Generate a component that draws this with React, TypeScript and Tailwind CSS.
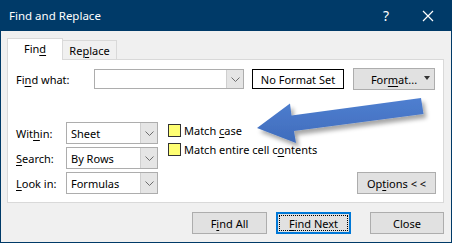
import type { ReactNode } from "react";

function U({ children }: { children: ReactNode }) {
  return <span className="underline decoration-1 underline-offset-2">{children}</span>;
}

function Chevron() {
  return (
    <svg width="9" height="5" viewBox="0 0 9 5">
      <path d="M0.5 0.5 L4.5 4.5 L8.5 0.5" fill="none" stroke="#6d6d6d" strokeWidth="1" />
    </svg>
  );
}

function Select({ value }: { value: string }) {
  return (
    <div className="flex h-[22px] w-[92px] border border-[#adadad] bg-white">
      <div className="flex flex-1 items-center pl-[4px]">{value}</div>
      <div className="flex w-[17px] items-center justify-center border-l border-[#cfcfcf] bg-[#e5e5e5]">
        <Chevron />
      </div>
    </div>
  );
}

function Field({ label, value }: { label: ReactNode; value: string }) {
  return (
    <div className="flex items-center">
      <span className="w-[50px]">{label}</span>
      <Select value={value} />
    </div>
  );
}

function Check({ children }: { children: ReactNode }) {
  return (
    <div className="flex h-[14px] items-center gap-[3px]">
      <span className="h-[13px] w-[13px] border border-[#333333] bg-[#ffff73]" />
      <span>{children}</span>
    </div>
  );
}

function Btn({ children, className }: { children: ReactNode; className?: string }) {
  return (
    <div
      className={
        "flex h-[22px] items-center justify-center border border-[#adadad] bg-[#e1e1e1] " + (className ?? "")
      }
    >
      {children}
    </div>
  );
}

export default function App() {
  return (
    <div className="relative flex h-[243px] w-[452px] flex-col border border-[#003a68] bg-[#f0f0f0] font-['Noto_Sans',sans-serif] text-[11px] leading-none text-black">
      {/* title bar */}
      <div className="flex h-[30px] shrink-0 items-center bg-[#003a68] pl-[8px] text-[11.5px] text-white">
        <span className="flex-1">Find and Replace</span>
        <span className="mr-[33px] text-[14px]">?</span>
        <svg width="12" height="12" viewBox="0 0 12 12" className="mr-[17px]">
          <path d="M1 1 L11 11 M11 1 L1 11" stroke="white" strokeWidth="1.2" />
        </svg>
      </div>

      <div className="flex flex-col pl-[6px] pt-[7px]">
        {/* tabs */}
        <div className="flex h-[21px] items-end">
          <div className="relative z-10 -mb-px flex h-[22px] w-[56px] items-center justify-center border border-b-0 border-[#d9d9d9] bg-white pb-[2px]">
            Fin<U>d</U>
          </div>
          <div className="flex h-[19px] w-[54px] items-center justify-center border border-b-0 border-l-0 border-[#d9d9d9] bg-[#f0f0f0]">
            Re<U>p</U>lace
          </div>
        </div>

        {/* panel */}
        <div className="flex h-[144px] w-[437px] flex-col border border-[#d9d9d9] bg-white px-[8px]">
          <div className="mt-[9px] flex h-[20px] items-center">
            <span className="w-[78px]">
              Fi<U>n</U>d what:
            </span>
            <div className="flex h-[20px] w-[150px] border border-[#adadad] bg-white">
              <div className="flex-1" />
              <div className="flex w-[17px] items-center justify-center border-l border-[#cfcfcf] bg-[#e5e5e5]">
                <Chevron />
              </div>
            </div>
            <div className="ml-[8px] flex h-[20px] w-[92px] items-center justify-center border border-black bg-white">
              No Format Set
            </div>
            <Btn className="relative ml-[9px] h-[20px] w-[82px]">
              <span>
                For<U>m</U>at...
              </span>
              <span className="absolute right-[4px] top-[7px] h-0 w-0 border-x-[3px] border-t-[4px] border-x-transparent border-t-[#333333]" />
            </Btn>
          </div>

          <div className="mt-[33px] flex">
            <div className="flex flex-col gap-[3px]">
              <Field
                label={
                  <>
                    Wit<U>h</U>in:
                  </>
                }
                value="Sheet"
              />
              <Field
                label={
                  <>
                    <U>S</U>earch:
                  </>
                }
                value="By Rows"
              />
              <Field
                label={
                  <>
                    <U>L</U>ook in:
                  </>
                }
                value="Formulas"
              />
            </div>
            <div className="ml-[10px] flex flex-col gap-[5px] pt-[1px]">
              <Check>
                Match <U>c</U>ase
              </Check>
              <Check>
                Match entire cell c<U>o</U>ntents
              </Check>
            </div>
            <Btn className="-mr-px ml-auto w-[79px] self-end">
              Op<U>t</U>ions &lt; &lt;
            </Btn>
          </div>
        </div>

        {/* bottom buttons */}
        <div className="mt-[9px] flex w-[437px] justify-end">
          <Btn className="w-[75px]">
            F<U>i</U>nd All
          </Btn>
          <div className="ml-[9px] flex h-[22px] w-[75px] items-center justify-center border-2 border-[#0078d7] bg-[#e1e1e1] p-px">
            <div className="flex h-full w-full items-center justify-center border border-dotted border-black">
              <span>
                <U>F</U>ind Next
              </span>
            </div>
          </div>
          <Btn className="ml-[19px] w-[74px]">Close</Btn>
        </div>
      </div>

      {/* annotation arrow */}
      <svg className="pointer-events-none absolute left-[-1px] top-[-1px]" width="452" height="243" viewBox="0 0 452 243">
        <defs>
          <filter id="sh" x="-20%" y="-50%" width="140%" height="200%">
            <feDropShadow dx="3" dy="4" stdDeviation="2" floodColor="#000" floodOpacity="0.35" />
          </filter>
          <linearGradient id="ag" x1="0" y1="0" x2="0" y2="1">
            <stop offset="0" stopColor="#4f7fd0" />
            <stop offset="1" stopColor="#3f6cbc" />
          </linearGradient>
        </defs>
        <polygon
          points="257,128 290,103.5 291.5,115.5 421,98 423.5,114 294,131 296,143"
          fill="url(#ag)"
          filter="url(#sh)"
        />
      </svg>
    </div>
  );
}
